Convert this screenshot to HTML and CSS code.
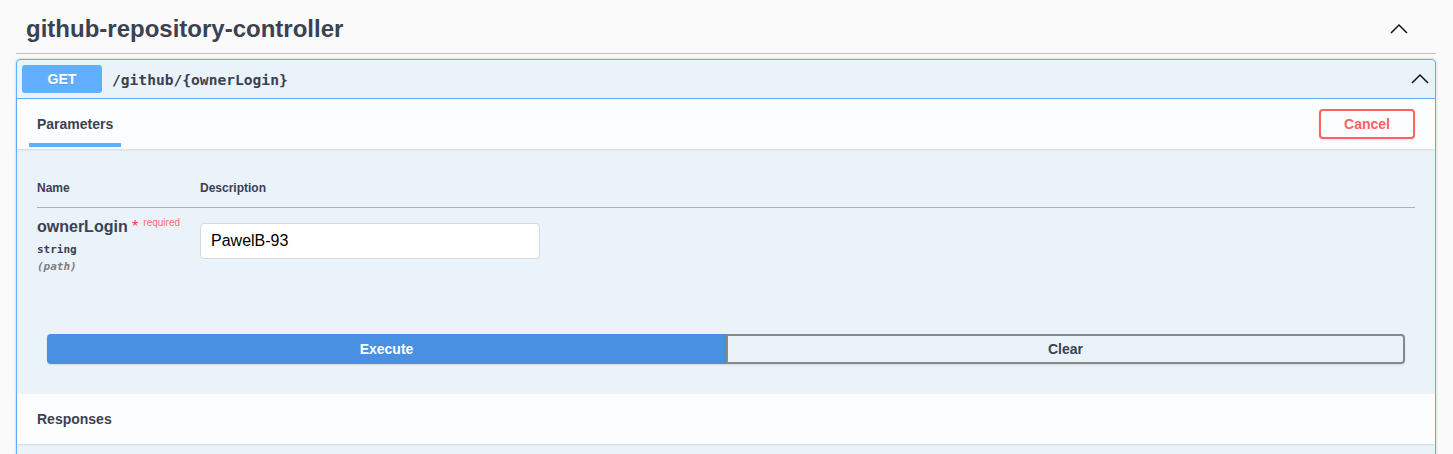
FILE: index.html
```html
<!DOCTYPE html>
<html>
<head>
<meta charset="utf-8">
<link rel="stylesheet" href="styles.css">
</head>
<body>
<div class="wrapper">
  <div class="tag">
    <h3 class="tag-title">github-repository-controller</h3>
    <span class="chev chev-tag">
      <svg width="20" height="20" viewBox="0 0 20 20"><polyline points="2,14 10,6 18,14" fill="none" stroke="#111" stroke-width="1.5"/></svg>
    </span>
  </div>
  <div class="opblock">
    <div class="summary">
      <span class="method">GET</span>
      <span class="path">/github/{ownerLogin}</span>
      <span class="chev">
        <svg width="20" height="20" viewBox="0 0 20 20"><polyline points="2,14 10,6 18,14" fill="none" stroke="#111" stroke-width="1.5"/></svg>
      </span>
    </div>
    <div class="section-header">
      <div class="tab"><h4><span class="tab-active">Parameters</span></h4></div>
      <button class="btn cancel">Cancel</button>
    </div>
    <div class="table-container">
      <table class="parameters">
        <thead>
          <tr><th class="col-name">Name</th><th>Description</th></tr>
        </thead>
        <tbody>
          <tr>
            <td class="col-name">
              <div class="param-name">ownerLogin&nbsp;<span class="star">*</span><span class="req">required</span></div>
              <div class="param-type">string</div>
              <div class="param-in">(path)</div>
            </td>
            <td><input class="param-input" type="text" value="PawelB-93"></td>
          </tr>
        </tbody>
      </table>
    </div>
    <div class="btn-group">
      <button class="btn execute">Execute</button>
      <button class="btn clear">Clear</button>
    </div>
    <div class="section-header">
      <h4 class="resp-title">Responses</h4>
    </div>
    <div class="spacer"></div>
  </div>
</div>
</body>
</html>
```
FILE: styles.css
```css
html, body {
  margin: 0;
  padding: 0;
  background: #fafafa;
  font-family: "Liberation Sans", Arial, sans-serif;
  color: #3b4151;
}
.wrapper {
  padding: 5px 17px 0 16px;
}
.tag {
  display: flex;
  align-items: center;
  padding: 10px 20px 10px 10px;
  border-bottom: 1px solid rgba(59, 65, 81, 0.3);
  margin-bottom: 5px;
}
.tag-title {
  flex: 1;
  margin: 0;
  font-size: 24px;
  line-height: 28px;
  font-weight: 700;
  color: #3b4151;
}
.chev {
  display: flex;
  width: 20px;
  height: 20px;
}
.chev-tag {
  margin-right: 7px;
}
.opblock {
  border: 1px solid #61affe;
  border-radius: 4px;
  background: rgba(97, 175, 254, 0.1);
  box-shadow: 0 0 3px rgba(0, 0, 0, 0.19);
}
.summary {
  display: flex;
  align-items: center;
  padding: 5px;
  border-bottom: 1px solid #61affe;
}
.method {
  background: #61affe;
  color: #fff;
  font-size: 14px;
  line-height: 16px;
  font-weight: 700;
  min-width: 80px;
  padding: 6px 0;
  text-align: center;
  border-radius: 3px;
  text-shadow: 0 1px 0 rgba(0, 0, 0, 0.1);
}
.path {
  flex: 1;
  padding: 0 10px;
  font-family: "DejaVu Sans Mono", "Liberation Mono", monospace;
  font-size: 14.6px;
  font-weight: 700;
  color: #3b4151;
}
.section-header {
  display: flex;
  align-items: center;
  box-sizing: border-box;
  min-height: 50px;
  padding: 8px 20px;
  background: rgba(255, 255, 255, 0.8);
  box-shadow: 0 1px 2px rgba(0, 0, 0, 0.1);
}
.tab {
  flex: 1;
}
.tab h4, .resp-title {
  margin: 0;
  font-size: 14px;
  font-weight: 700;
  color: #3b4151;
}
.tab-active {
  position: relative;
}
.tab-active::after {
  content: "";
  position: absolute;
  left: -10%;
  width: 120%;
  bottom: -15px;
  height: 4px;
  background: #61affe;
}
.btn {
  font-family: "Liberation Sans", Arial, sans-serif;
  font-size: 14px;
  line-height: 16px;
  font-weight: 700;
  padding: 5px 23px;
  border: 2px solid #888;
  border-radius: 4px;
  background: transparent;
  color: #3b4151;
  box-shadow: 0 1px 2px rgba(0, 0, 0, 0.1);
  cursor: pointer;
}
.cancel {
  border-color: #ff6060;
  color: #ff6060;
  background: transparent;
  padding: 5px 12px;
  width: 96px;
}
.table-container {
  padding: 20px;
}
.parameters {
  width: 100%;
  border-collapse: collapse;
}
.parameters th {
  text-align: left;
  font-size: 12px;
  line-height: 14px;
  font-weight: 700;
  padding: 12px 0;
  border-bottom: 1px solid rgba(59, 65, 81, 0.2);
  color: #3b4151;
}
.col-name {
  width: 163px;
}
.parameters td {
  vertical-align: top;
  padding: 10px 0;
}
.param-name {
  font-size: 16px;
  line-height: 18px;
  font-weight: 700;
  color: #3b4151;
}
.star {
  color: #ff3b3b;
  font-weight: 400;
}
.req {
  position: relative;
  top: -6px;
  padding: 5px;
  font-size: 10px;
  font-weight: 400;
  color: rgba(255, 0, 0, 0.6);
}
.param-type {
  padding: 5px 0 3px;
  font-family: "DejaVu Sans Mono", "Liberation Mono", monospace;
  font-size: 11px;
  line-height: 14px;
  font-weight: 700;
  color: #3b4151;
}
.param-in {
  font-family: "DejaVu Sans Mono", "Liberation Mono", monospace;
  font-size: 11px;
  line-height: 14px;
  font-weight: 700;
  font-style: italic;
  color: gray;
}
.param-input {
  box-sizing: border-box;
  width: 340px;
  height: 36px;
  margin: 5px 0;
  padding: 8px 10px;
  border: 1px solid #d9d9d9;
  border-radius: 4px;
  background: #fff;
  font-family: "Liberation Sans", Arial, sans-serif;
  font-size: 16px;
  color: #000;
  outline: none;
}
.btn-group {
  display: flex;
  padding: 30px;
}
.btn-group .btn {
  width: 50%;
}
.execute {
  background: #4990e2;
  border-color: #4990e2;
  color: #fff;
  border-radius: 4px 0 0 4px;
}
.clear {
  border-radius: 0 4px 4px 0;
}
.spacer {
  height: 40px;
}
```
